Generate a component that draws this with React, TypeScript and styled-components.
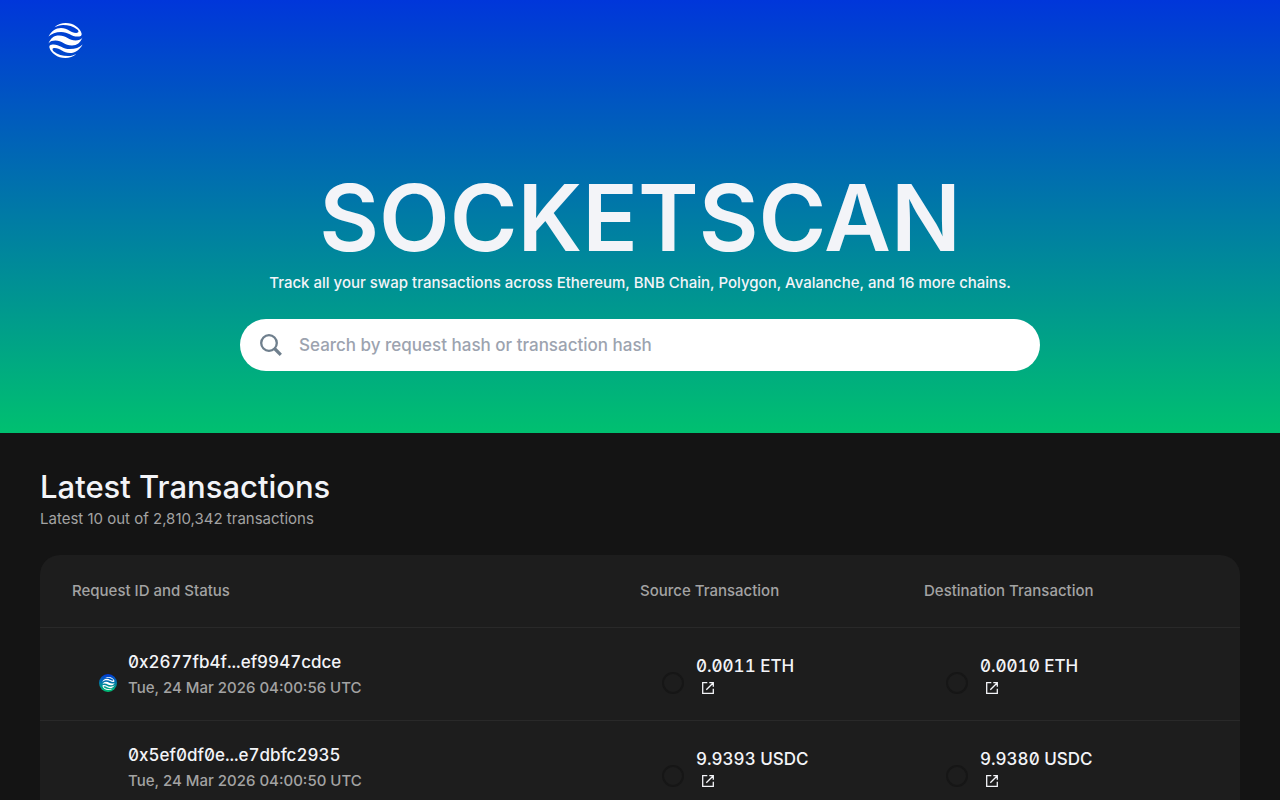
import React from "react";
import styled, { createGlobalStyle } from "styled-components";

const Global = createGlobalStyle`
  *, *::before, *::after { box-sizing: border-box; }
  html { background: #141414; }
  body {
    margin: 0;
    background: #141414;
    color: #f3f4f8;
    font-family: Inter, "Liberation Sans", sans-serif;
    font-size: 15px;
    line-height: 24px;
  }
`;

const Hero = styled.header`
  display: flex;
  flex-direction: column;
  padding: 22px 48px 62px;
  background: linear-gradient(180deg, #0036da 0%, #00c070 100%);
`;

const HomeLink = styled.a`
  display: flex;
  align-items: center;
  width: 36px;
  height: 36px;
`;

const HeroBody = styled.div`
  display: flex;
  flex-direction: column;
  align-items: center;
  padding-top: 112px;
`;

const Title = styled.h1`
  margin: 0;
  font-size: 92px;
  line-height: 96px;
  font-weight: 600;
`;

const Tagline = styled.p`
  margin: 5px 0 24px;
  font-weight: 500;
  text-align: center;
`;

const SearchBox = styled.label`
  display: flex;
  align-items: center;
  gap: 16px;
  width: 100%;
  max-width: 800px;
  height: 52px;
  padding: 0 19px;
  border-radius: 26px;
  background: #fff;
`;

const SearchInput = styled.input`
  flex: 1;
  min-width: 0;
  padding: 0;
  border: 0;
  outline: 0;
  background: transparent;
  color: #141414;
  font: inherit;
  font-size: 17px;
  font-weight: 500;
  &::placeholder { color: #9ca3af; opacity: 1; }
`;

const Main = styled.main`
  padding: 34px 40px 0;
`;

const Heading = styled.h2`
  margin: 0;
  font-size: 31px;
  line-height: 40px;
  font-weight: 500;
`;

const Count = styled.p`
  margin: 0 0 24px;
  color: #a3a3a3;
`;

const Table = styled.table`
  width: 100%;
  table-layout: fixed;
  border-collapse: separate;
  border-spacing: 0;
  border-radius: 20px 20px 0 0;
  background: #1d1d1d;
`;

const HeadCell = styled.th<{ $width?: string; $first?: boolean }>`
  width: ${(p) => p.$width ?? "auto"};
  height: 72px;
  padding: 0 0 0 ${(p) => (p.$first ? 32 : 0)}px;
  color: #a3a3a3;
  font-weight: 500;
  text-align: left;
`;

const Cell = styled.td<{ $first?: boolean }>`
  height: 93px;
  padding: 0 0 0 ${(p) => (p.$first ? 32 : 0)}px;
  border-top: 1px solid #292929;
`;

const CellBody = styled.div`
  display: flex;
  align-items: center;
  gap: 10px;
`;

const Avatar = styled.div`
  display: flex;
  align-items: flex-end;
  justify-content: flex-end;
  width: 46px;
  height: 36px;
`;

const ChainRing = styled.span`
  width: 22px;
  height: 22px;
  margin: 0 2px -2px 0;
  border: 2px solid #161616;
  border-radius: 50%;
`;

const Badge = styled.span`
  display: flex;
  align-items: center;
  justify-content: center;
  width: 18px;
  height: 18px;
  margin-right: 1px;
  border-radius: 50%;
  background: linear-gradient(#0036da, #00c070);
`;

const Stack = styled.div`
  display: flex;
  flex-direction: column;
`;

const Value = styled.span`
  color: #f3f4f8;
  font-size: 17px;
  line-height: 28px;
  font-weight: 500;
  font-variant-numeric: tabular-nums slashed-zero;
`;

const HashLink = styled(Value).attrs({ as: "a" })<{ href: string }>`
  text-decoration: none;
`;

const Time = styled.time`
  color: #a3a3a3;
  font-weight: 500;
`;

const OpenLink = styled.a`
  display: flex;
  width: 16px;
  height: 16px;
  margin-left: 4px;
  color: #f3f4f8;
`;

const crescentBand =
  "M0 41C8 25 22 15 38 15c20 0 30 15 46 15 8 0 9-5 3-10C76 10 60 6 44 6c-10 0-18 3-26 7C28 4 40 0 52 0c24 0 44 15 48 31 2 8-4 10-12 10-18 0-28-14-50-14-16 0-29 5-38 14Z";

function Logo({ size }: { size: number }) {
  return (
    <svg width={size} height={size} viewBox="0 0 103 106" fill="#fff" aria-hidden="true">
      <path d={crescentBand} />
      <path d="M0 62C7 46 16 38 32 38c22 0 30 15 50 15 9 0 16-2 21-9-7 16-16 24-32 24-22 0-30-15-50-15-9 0-16 2-21 9Z" />
      <path d={crescentBand} transform="rotate(180 51.5 53)" />
    </svg>
  );
}

function SearchIcon() {
  return (
    <svg width="24" height="24" viewBox="0 0 24 24" fill="none" stroke="#6f7f8d" aria-hidden="true">
      <circle cx="10" cy="10" r="7.800" strokeWidth="2.300" />
      <path d="m15 15 6.800 6.800" strokeWidth="3.200" />
    </svg>
  );
}

function OpenIcon() {
  return (
    <svg width="16" height="16" viewBox="0 0 16 16" fill="none" stroke="currentColor" strokeWidth="1.300" aria-hidden="true">
      <path d="M7.300 2.700H2.700v10.600h10.600V8.700M9.300 2.700h4V6.700M13.300 2.700 6.300 9.700" />
    </svg>
  );
}

const transactions = [
  { id: "0x2677fb4f...ef9947cdce", time: "Tue, 24 Mar 2026 04:00:56 UTC", source: "0.0011 ETH", destination: "0.0010 ETH", badge: true },
  { id: "0x5ef0df0e...e7dbfc2935", time: "Tue, 24 Mar 2026 04:00:50 UTC", source: "9.9393 USDC", destination: "9.9380 USDC", badge: false },
];

function Amount({ value, label }: { value: string; label: string }) {
  return (
    <CellBody>
      <Avatar><ChainRing /></Avatar>
      <Stack>
        <Value>{value}</Value>
        <OpenLink href="#" aria-label={label}><OpenIcon /></OpenLink>
      </Stack>
    </CellBody>
  );
}

export default function App() {
  return (
    <>
      <Global />
      <Hero>
        <HomeLink href="#" aria-label="Home"><Logo size={35} /></HomeLink>
        <HeroBody>
          <Title>SOCKETSCAN</Title>
          <Tagline>Track all your swap transactions across Ethereum, BNB Chain, Polygon, Avalanche, and 16 more chains.</Tagline>
          <SearchBox>
            <SearchIcon />
            <SearchInput type="text" aria-label="Search" placeholder="Search by request hash or transaction hash" />
          </SearchBox>
        </HeroBody>
      </Hero>
      <Main>
        <Heading>Latest Transactions</Heading>
        <Count>Latest 10 out of 2,810,342 transactions</Count>
        <Table>
          <thead>
            <tr>
              <HeadCell scope="col" $first $width="50%">Request ID and Status</HeadCell>
              <HeadCell scope="col">Source Transaction</HeadCell>
              <HeadCell scope="col" $width="316px">Destination Transaction</HeadCell>
            </tr>
          </thead>
          <tbody>
            {transactions.map((t) => (
              <tr key={t.id}>
                <Cell $first>
                  <CellBody>
                    <Avatar>{t.badge && <Badge><Logo size={13} /></Badge>}</Avatar>
                    <Stack>
                      <HashLink href="#">{t.id}</HashLink>
                      <Time>{t.time}</Time>
                    </Stack>
                  </CellBody>
                </Cell>
                <Cell><Amount value={t.source} label="Open source transaction" /></Cell>
                <Cell><Amount value={t.destination} label="Open destination transaction" /></Cell>
              </tr>
            ))}
          </tbody>
        </Table>
      </Main>
    </>
  );
}
